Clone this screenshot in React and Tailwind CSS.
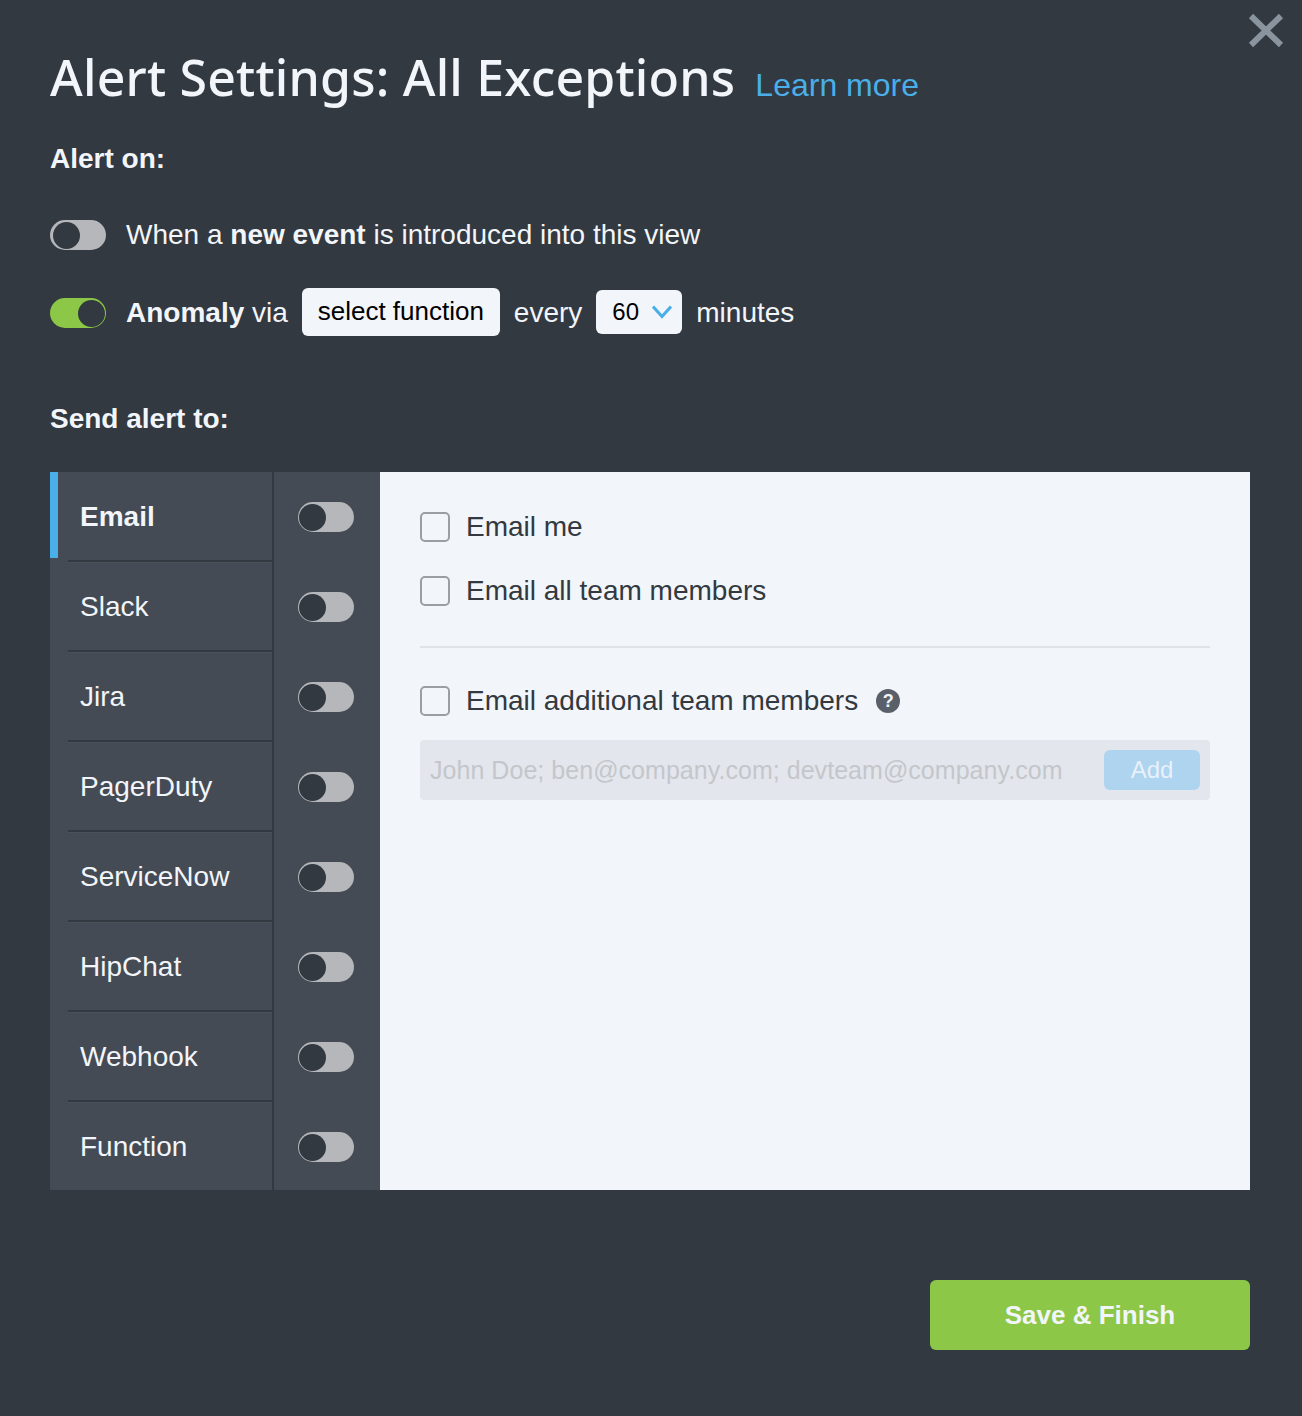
const channels = ['Email', 'Slack', 'Jira', 'PagerDuty', 'ServiceNow', 'HipChat', 'Webhook', 'Function'];

const Toggle = ({ on, inset }) => (
  <div className={`w-[56px] h-[30px] rounded-full flex items-center shrink-0 ${on ? 'bg-[#8cc747] justify-end pr-[1px]' : 'bg-[#b5b7bb] justify-start'} ${inset ? 'pl-[3px]' : ''} ${!on && !inset ? 'pl-[1px]' : ''}`}>
    <div className="w-[27px] h-[27px] rounded-full bg-[#323940]" />
  </div>
);

const Check = ({ label }) => (
  <div className="flex items-center h-[30px]">
    <div className="w-[30px] h-[30px] rounded-[5px] border-2 border-[#9a9da2] shrink-0" />
    <span className="ml-4 text-[28px] text-[#323940]">{label}</span>
  </div>
);

const App = () => {
  return (
    <div className="relative w-[1302px] h-[1416px] bg-[#323940] text-[#f2f5fa] px-[50px] pt-[50px] font-['Liberation_Sans',Arial,sans-serif]">
      <svg className="absolute left-[1248px] top-[13px]" width="36" height="35" viewBox="0 0 36 35">
        <path d="M3 3 L33 32 M33 3 L3 32" stroke="#8a949e" strokeWidth="6" fill="none" />
      </svg>

      <div className="-mt-[1px] flex items-baseline h-[56px]">
        <h1 className="text-[50px] leading-[56px] tracking-[0.2px] font-['Noto_Sans',sans-serif] font-medium">Alert Settings: All Exceptions</h1>
        <a className="ml-[20px] text-[32px] text-[#4aaee8]">Learn more</a>
      </div>

      <div className="mt-[38px] h-[32px] leading-[32px] text-[28px] font-bold">Alert on:</div>

      <div className="mt-[40px] h-[40px] flex items-center text-[28px]">
        <Toggle inset />
        <span className="ml-5">When a <b>new event</b> is introduced into this view</span>
      </div>

      <div className="mt-[33px] h-[48px] flex items-center text-[28px]">
        <div className="mt-[2px]"><Toggle on /></div>
        <span className="ml-5 pt-[2px]"><b>Anomaly</b> via</span>
        <div className="ml-[14px] w-[198px] h-[48px] pb-[2px] rounded-[6px] bg-[#f2f5fa] text-black text-[26px] flex items-center justify-center">select function</div>
        <span className="ml-[14px] pt-[2px]">every</span>
        <div className="ml-[14px] w-[86px] h-[44px] rounded-[6px] bg-[#f2f5fa] text-black text-[24px] flex items-center pl-[16px]">
          60
          <svg className="ml-[13px]" width="20" height="14" viewBox="0 0 20 14">
            <path d="M1 1.5 L10 11.5 L19 1.5" stroke="#4aaee8" strokeWidth="3" fill="none" />
          </svg>
        </div>
        <span className="ml-[14px] pt-[2px]">minutes</span>
      </div>

      <div className="mt-[67px] h-[32px] leading-[32px] text-[28px] font-bold">Send alert to:</div>

      <div className="mt-[37px] w-[1200px] h-[718px] flex">
        <div className="relative w-[330px] bg-[#454b54]">
          <div className="absolute left-0 top-0 w-[8px] h-[86px] bg-[#4aaee8]" />
          {channels.map((name, i) => (
            <div key={name} className="flex h-[90px]">
              <div className={`ml-[18px] w-[206px] pl-[12px] flex items-center border-r-2 border-[#323940] text-[28px] ${i < 7 ? 'border-b-2 pt-[2px]' : 'pb-[1px]'} ${i === 0 ? 'font-bold' : 'shadow-[inset_0_1px_0_#4b5159]'}`}>
                {name}
              </div>
              <div className="flex-1 flex items-center pl-[24px]">
                <Toggle />
              </div>
            </div>
          ))}
        </div>

        <div className="flex-1 bg-[#f2f5fa] px-[40px] pt-[40px]">
          <Check label="Email me" />
          <div className="mt-[34px]"><Check label="Email all team members" /></div>
          <div className="mt-[40px] h-[2px] bg-[#dfe2e8]" />
          <div className="mt-[38px] flex items-center">
            <Check label="Email additional team members" />
            <div className="ml-[18px] w-[24px] h-[24px] rounded-full bg-[#5a6069] text-[#f2f5fa] text-[18px] font-bold flex items-center justify-center">?</div>
          </div>
          <div className="mt-[24px] h-[60px] rounded-[4px] bg-[#e3e6ec] flex items-center justify-between pl-[10px] pr-[10px]">
            <span className="pt-[2px] text-[25px] tracking-[0.04px] text-[#c3c6cb]">John Doe; ben@company.com; devteam@company.com</span>
            <div className="w-[96px] h-[40px] rounded-[6px] bg-[#aed4f0] text-[#e8f1fa] text-[24px] flex items-center justify-center">Add</div>
          </div>
        </div>
      </div>

      <div className="mt-[90px] w-[1200px] flex justify-end">
        <div className="w-[320px] h-[70px] rounded-[6px] bg-[#8cc747] text-[#f2f5fa] text-[26px] font-bold flex items-center justify-center">Save &amp; Finish</div>
      </div>
    </div>
  );
};

export default App;
